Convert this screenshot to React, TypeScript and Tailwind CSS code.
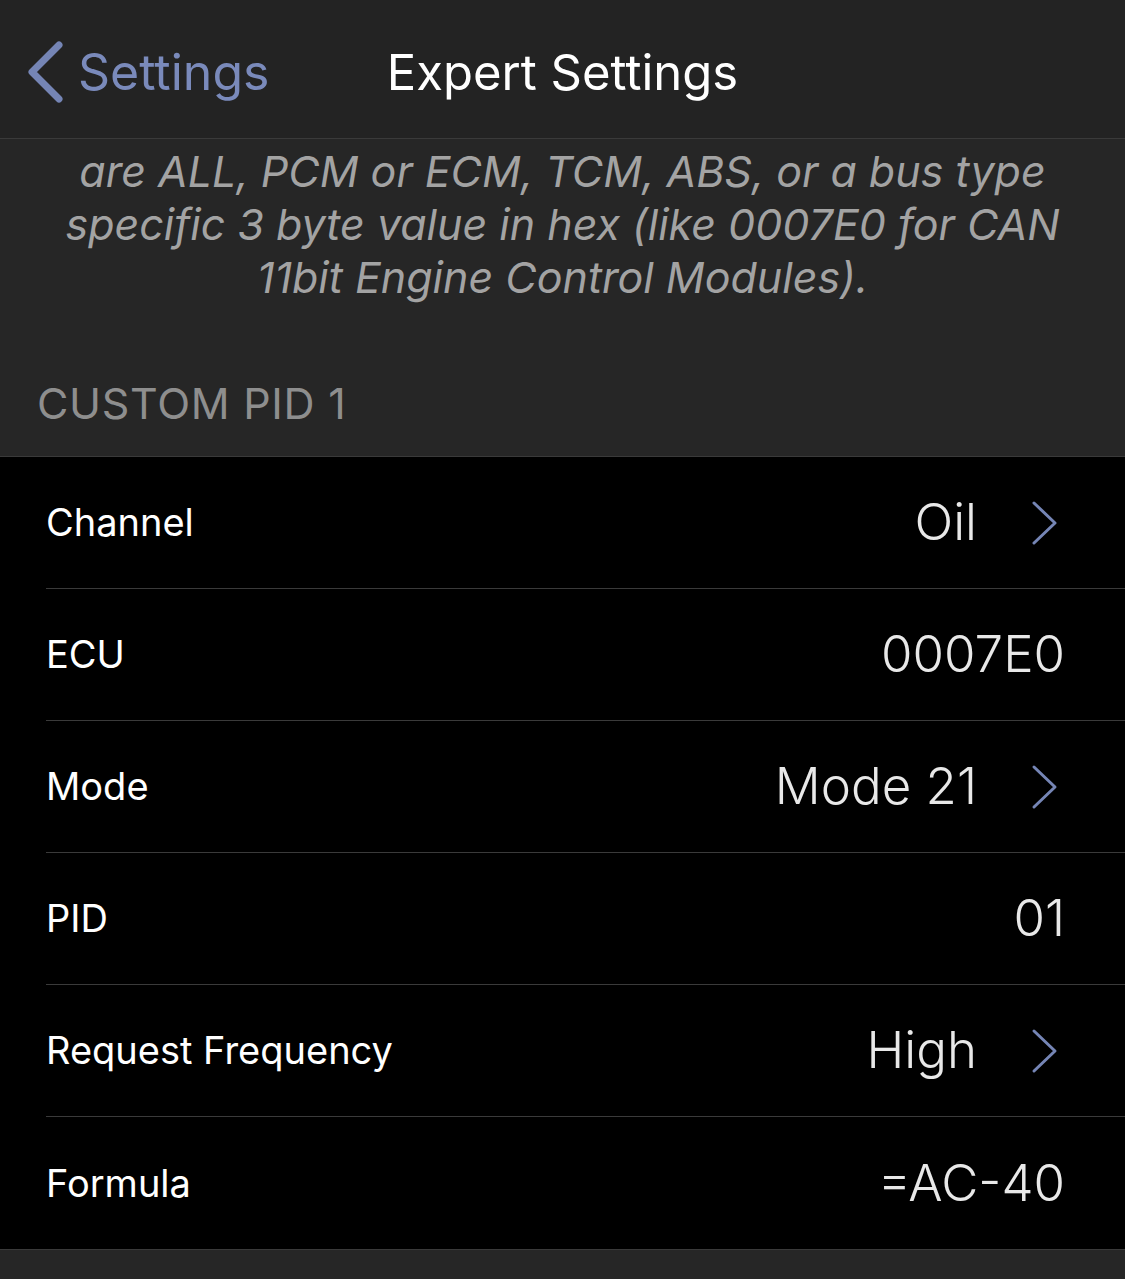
const rows = [
  { label: 'Channel', value: 'Oil', chevron: true },
  { label: 'ECU', value: '0007E0', chevron: false },
  { label: 'Mode', value: 'Mode 21', chevron: true },
  { label: 'PID', value: '01', chevron: false },
  { label: 'Request Frequency', value: 'High', chevron: true },
  { label: 'Formula', value: '=AC-40', chevron: false },
]

function Chevron() {
  return (
    <svg width="28" height="46" viewBox="0 0 28 46" className="shrink-0">
      <path d="M3 3 L24 23 L3 43" fill="none" stroke="#7585b5" strokeWidth="3" strokeLinecap="round" strokeLinejoin="round" />
    </svg>
  )
}

export default function App() {
  return (
    <main
      className="flex h-[1279px] w-[1125px] flex-col overflow-hidden bg-[#262626]"
      style={{ fontFamily: 'Inter, "Noto Sans", sans-serif' }}
    >
      <header className="relative flex h-[139px] shrink-0 items-center border-b border-[#3a3a3a] bg-[#232323] pt-[6px]">
        <div className="flex items-center pl-[26px]">
          <svg width="38" height="64" viewBox="0 0 38 64">
            <path d="M33 5 L6 32 L33 59" fill="none" stroke="#7585b5" strokeWidth="7" strokeLinecap="round" strokeLinejoin="round" />
          </svg>
          <span className="ml-[14px] text-[50px] leading-none text-[#7a8abb]">Settings</span>
        </div>
        <div className="absolute left-0 right-0 text-center text-[49px] leading-none text-white">Expert Settings</div>
      </header>

      <section className="px-[38px] pt-[6px] text-center text-[43px] italic leading-[53px] text-[#a3a3a3]">
        <p>
          are ALL, PCM or ECM, TCM, ABS, or a bus type specific 3 byte value in hex (like 0007E0 for CAN 11bit Engine Control Modules).
        </p>
      </section>

      <div className="mt-[78px] pb-[28px] pl-[37px] text-[43px] leading-none tracking-[0.7px] text-[#8e8e8e]">CUSTOM PID 1</div>

      <div className="mt-[3px] border-y border-[#3a3a3a] bg-black">
        {rows.map((row, i) => (
          <div key={row.label} className="pl-[46px]">
            <div
              className={
                'flex h-[132px] items-center justify-between pr-[60px] ' +
                (i < rows.length - 1 ? 'border-b border-[#3a3a3a]' : '')
              }
            >
              <span className="text-[38px] text-white">{row.label}</span>
              <div className="flex items-center">
                <span className="text-[51px] font-light text-[#e8e8e8]">{row.value}</span>
                {row.chevron && (
                  <div className="ml-[54px] mr-[6px]">
                    <Chevron />
                  </div>
                )}
              </div>
            </div>
          </div>
        ))}
      </div>
    </main>
  )
}
